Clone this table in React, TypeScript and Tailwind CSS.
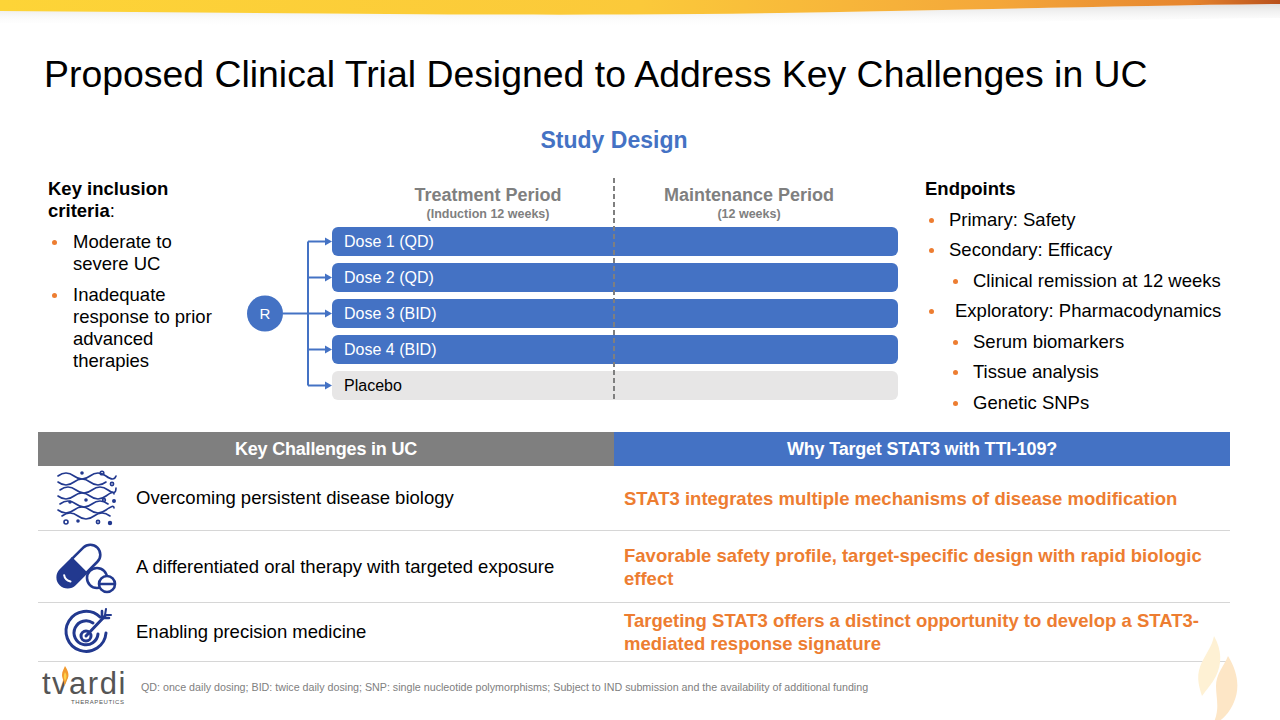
import React from "react";

const NAVY = "#22398f";

const TopWave = () => (
  <svg viewBox="0 0 1280 30" preserveAspectRatio="none" className="block w-full h-[30px]">
    <defs>
      <linearGradient id="yel" x1="0" y1="0" x2="1" y2="0">
        <stop offset="0" stopColor="#fdd437" />
        <stop offset="0.5" stopColor="#fbc93a" />
        <stop offset="0.78" stopColor="#f4a73a" />
        <stop offset="0.93" stopColor="#e6852e" />
        <stop offset="1" stopColor="#b8501c" />
      </linearGradient>
      <linearGradient id="shd" x1="0" y1="0" x2="0" y2="1">
        <stop offset="0" stopColor="#e0e0e0" />
        <stop offset="1" stopColor="#ffffff" stopOpacity="0" />
      </linearGradient>
    </defs>
    <path d="M0 10 C300 13 500 16 700 14 C900 12 1100 6 1280 4 L1280 18 C1100 20 900 24 700 27 C500 28 300 25 0 23 Z" fill="url(#shd)" />
    <path d="M0 0 H1280 V4 C1100 6 900 12 700 14 C500 16 300 13 0 11 Z" fill="url(#yel)" />
  </svg>
);

const Bullet = ({ w, top }: { w: string; top: string }) => (
  <span className={`${w} shrink-0 pl-[4px]`}>
    <span className={`block h-[5px] w-[5px] rounded-full bg-[#ed7d31] ${top}`} />
  </span>
);

const WavesIcon = () => (
  <svg width="62" height="56" viewBox="0 0 62 56" fill="none" stroke={NAVY} strokeWidth="1.6" strokeLinecap="round">
    <path d="M2 6 Q10 0 18 6 T34 6 T50 6 T60 6" />
    <path d="M2 12 Q10 18 18 12 T34 12 T50 12" />
    <path d="M4 20 Q12 14 20 20 T36 20 T52 20 T60 18" />
    <path d="M2 26 Q10 32 18 26 T34 26 T50 26 T58 24" />
    <path d="M4 34 Q12 28 20 34 T36 34 T52 34" />
    <path d="M2 40 Q10 46 18 40 T34 40 T50 40 T58 38" />
    <path d="M6 46 Q14 40 22 46 T38 46 T54 46" />
    <circle cx="46" cy="3" r="1.8" />
    <circle cx="56" cy="14" r="1.6" />
    <circle cx="10" cy="52" r="2" />
    <circle cx="42" cy="52" r="1.6" />
    <circle cx="48" cy="30" r="1.4" />
    <circle cx="58" cy="31" r="1.2" fill={NAVY} />
    <circle cx="26" cy="3" r="1" fill={NAVY} />
    <circle cx="30" cy="30" r="1" fill={NAVY} />
    <circle cx="14" cy="32" r="1" fill={NAVY} />
    <circle cx="54" cy="53" r="1.4" fill={NAVY} />
    <circle cx="22" cy="51" r="1" fill={NAVY} />
  </svg>
);

const PillIcon = () => (
  <svg width="64" height="54" viewBox="0 0 64 54" fill="none" stroke={NAVY} strokeWidth="2.6" strokeLinecap="round">
    <g transform="rotate(-45 24 26)">
      <path d="M24 16 H8 A10 10 0 0 0 8 36 H24 Z" fill={NAVY} />
      <path d="M24 16 H40 A10 10 0 0 1 40 36 H24" />
      <path d="M7 22 Q4 26 7 31" stroke="#ffffff" strokeWidth="2" />
    </g>
    <circle cx="42" cy="38" r="10" fill="#ffffff" />
    <circle cx="52" cy="44" r="8" fill="#ffffff" />
    <line x1="45" y1="44" x2="59" y2="44" />
  </svg>
);

const TargetIcon = () => (
  <svg width="50" height="50" viewBox="0 0 50 50" fill="none" stroke={NAVY} strokeWidth="3" strokeLinecap="round">
    <path d="M38 10 A20 20 0 1 0 44 26" />
    <path d="M31 16 A12 12 0 1 0 36 27" />
    <circle cx="24" cy="29" r="5" />
    <line x1="24" y1="29" x2="43" y2="9" />
    <path d="M40 4 L40 11 L47 11" strokeWidth="2.6" />
    <path d="M44 2 L43 8 L49 8" strokeWidth="2" />
  </svg>
);

const LogoFlame = () => (
  <svg width="10" height="20" viewBox="0 0 10 20">
    <path d="M5 0 C8 5 10 9 7 14 C6 17 5 19 4 20 C5 16 2 13 2 9 C2 5 4 3 5 0 Z" fill="#f29a2e" />
    <path d="M5 6 C7 9 7 12 5 15 C4 13 3 10 5 6 Z" fill="#fcd34d" />
  </svg>
);

const Watermark = () => (
  <svg width="56" height="86" viewBox="0 0 56 86" className="absolute left-[1192px] top-[636px]">
    <path d="M22 0 C30 14 30 28 24 40 C20 48 14 54 10 60 C6 48 4 38 10 26 C15 16 20 10 22 0 Z" fill="#fef1d4" />
    <path d="M36 20 C46 36 48 52 42 66 C38 76 32 82 26 86 L22 86 C28 72 24 62 24 50 C24 38 32 30 36 20 Z" fill="#fde6c6" />
  </svg>
);

const Connector = () => {
  const ys = [14.5, 50.5, 86.5, 122.5, 158.5];
  return (
    <svg width="85" height="173" viewBox="0 0 85 173" className="shrink-0">
      <line x1="36" y1="86.5" x2="61" y2="86.5" stroke="#4472c4" strokeWidth="2" />
      <line x1="61" y1="14.5" x2="61" y2="158.5" stroke="#4472c4" strokeWidth="2" />
      {ys.map((y) => (
        <g key={y}>
          <line x1="61" y1={y} x2="80" y2={y} stroke="#4472c4" strokeWidth="2" />
          <path d={`M78 ${y - 4} L85 ${y} L78 ${y + 4} Z`} fill="#4472c4" />
        </g>
      ))}
      <circle cx="18" cy="86.5" r="18" fill="#4472c4" />
      <text x="18" y="92" textAnchor="middle" fontSize="15" fill="#ffffff" fontFamily="Liberation Sans, Arial, sans-serif">R</text>
    </svg>
  );
};

const arms = [
  { label: "Dose 1 (QD)", placebo: false },
  { label: "Dose 2 (QD)", placebo: false },
  { label: "Dose 3 (BID)", placebo: false },
  { label: "Dose 4 (BID)", placebo: false },
  { label: "Placebo", placebo: true },
];

const rows = [
  {
    icon: <WavesIcon />,
    left: "Overcoming persistent disease biology",
    right: ["STAT3 integrates multiple mechanisms of disease modification"],
    h: "h-[65px]",
  },
  {
    icon: <PillIcon />,
    left: "A differentiated oral therapy with targeted exposure",
    right: ["Favorable safety profile, target-specific design with rapid biologic", "effect"],
    h: "h-[72px]",
  },
  {
    icon: <TargetIcon />,
    left: "Enabling precision medicine",
    right: ["Targeting STAT3 offers a distinct opportunity to develop a STAT3-", "mediated response signature"],
    h: "h-[59px]",
  },
];

const endpoints = [
  { text: "Primary: Safety", sub: false },
  { text: "Secondary: Efficacy", sub: false },
  { text: "Clinical remission at 12 weeks", sub: true },
  { text: "Exploratory: Pharmacodynamics", sub: false, pad: true },
  { text: "Serum biomarkers", sub: true },
  { text: "Tissue analysis", sub: true },
  { text: "Genetic SNPs", sub: true },
];

export default function App() {
  return (
    <div className="relative w-[1280px] h-[720px] overflow-hidden bg-white text-black font-['Liberation_Sans',Arial,sans-serif]">
      <TopWave />

      <h1 className="ml-[44px] mt-[26px] text-[37.4px] leading-[37px] whitespace-nowrap">
        Proposed Clinical Trial Designed to Address Key Challenges in UC
      </h1>

      <div className="ml-[38px] mt-[33px] w-[1152px] text-center text-[23px] leading-[28px] font-bold text-[#4472c4]">
        Study Design
      </div>

      <div className="mt-[24px] flex h-[254px]">
        {/* Inclusion criteria */}
        <div className="ml-[48px] w-[180px] shrink-0 text-[18.5px] leading-[22px]">
          <div className="font-bold">
            Key inclusion
            <br />
            criteria<span className="font-normal">:</span>
          </div>
          <div className="mt-[9px] flex">
            <Bullet w="w-[25px]" top="mt-[9px]" />
            <span>Moderate to severe UC</span>
          </div>
          <div className="mt-[9px] flex">
            <Bullet w="w-[25px]" top="mt-[9px]" />
            <span>Inadequate response to prior advanced therapies</span>
          </div>
        </div>

        {/* Diagram */}
        <div className="relative ml-[19px] w-[651px] shrink-0">
          <div className="mt-[6px] flex text-[#7f7f7f] font-bold text-center">
            <div className="ml-[115px] w-[252px]">
              <div className="text-[18px] leading-[22px]">Treatment Period</div>
              <div className="mt-[1px] text-[12.5px] leading-[14px]">(Induction 12 weeks)</div>
            </div>
            <div className="w-[270px]">
              <div className="text-[18px] leading-[22px]">Maintenance Period</div>
              <div className="mt-[1px] text-[12.5px] leading-[14px]">(12 weeks)</div>
            </div>
          </div>
          <div className="mt-[6px] flex">
            <Connector />
            <div className="flex w-[566px] flex-col gap-[7px]">
              {arms.map((a) => (
                <div
                  key={a.label}
                  className={`flex h-[29px] items-center rounded-[6px] pl-[12px] text-[16px] ${
                    a.placebo ? "bg-[#e7e6e6] text-black" : "bg-[#4472c4] text-white"
                  }`}
                >
                  {a.label}
                </div>
              ))}
            </div>
          </div>
          <svg width="2" height="222" className="absolute left-[366px] top-0">
            <line x1="1" y1="0" x2="1" y2="222" stroke="#7f7f7f" strokeWidth="2" strokeDasharray="5 3" />
          </svg>
        </div>

        {/* Endpoints */}
        <div className="ml-[27px] w-[320px] shrink-0 text-[18.5px] leading-[30.5px]">
          <div className="-mt-[4px] font-bold">Endpoints</div>
          {endpoints.map((e) => (
            <div key={e.text} className={`flex ${e.sub ? "pl-[24px]" : ""}`}>
              <Bullet w="w-[24px]" top="mt-[13px]" />
              <span className={e.pad ? "pl-[6px]" : ""}>{e.text}</span>
            </div>
          ))}
        </div>
      </div>

      {/* Table */}
      <div className="ml-[38px] w-[1192px]">
        <div className="flex h-[34px] text-[18px] font-bold text-white tracking-[-0.2px]">
          <div className="flex w-[576px] items-center justify-center bg-[#7f7f7f]">Key Challenges in UC</div>
          <div className="flex flex-1 items-center justify-center bg-[#4472c4]">Why Target STAT3 with TTI-109?</div>
        </div>
        {rows.map((r) => (
          <div key={r.left} className={`flex ${r.h} border-b border-[#d6d6d6]`}>
            <div className="flex w-[576px] items-center">
              <div className="flex w-[98px] justify-center">{r.icon}</div>
              <span className="text-[18.5px]">{r.left}</span>
            </div>
            <div className="flex flex-1 flex-col justify-center pl-[10px] text-[18.5px] leading-[23px] font-bold text-[#ed7d31] whitespace-nowrap">
              {r.right.map((t) => (
                <div key={t}>{t}</div>
              ))}
            </div>
          </div>
        ))}
      </div>

      {/* Footer */}
      <div className="ml-[42px] mt-[7px] flex items-center">
        <div className="relative w-[99px] shrink-0">
          <div className="relative h-[30px] text-[31px] leading-[30px] tracking-[1.5px] text-[#555555]">
            tvardi
            <span className="absolute left-[18px] -top-[3px]">
              <LogoFlame />
            </span>
          </div>
          <div className="ml-[29px] text-[6px] leading-[7px] tracking-[0.6px] text-[#555555]">THERAPEUTICS</div>
        </div>
        <div className="text-[10.7px] text-[#808080]">
          QD: once daily dosing; BID: twice daily dosing; SNP: single nucleotide polymorphisms; Subject to IND submission and the availability of additional funding
        </div>
      </div>

      <Watermark />
    </div>
  );
}
